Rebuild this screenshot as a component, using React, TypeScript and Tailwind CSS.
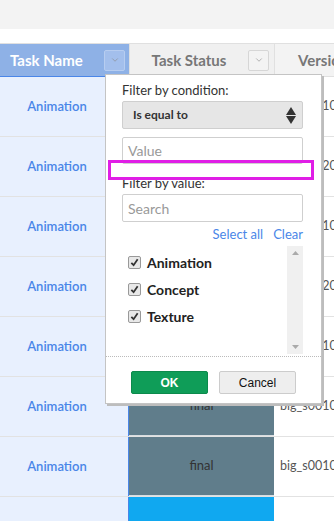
import { ChevronDown } from "lucide-react";

const rows = [
  { status: "bg-[#607d8b]", label: "final", ver: "big_s0010_comp" },
  { status: "bg-[#607d8b]", label: "final", ver: "big_s0020_comp" },
  { status: "bg-[#607d8b]", label: "final", ver: "big_s0010_comp" },
  { status: "bg-[#607d8b]", label: "final", ver: "big_s0020_comp" },
  { status: "bg-[#607d8b]", label: "final", ver: "big_s0010_comp" },
  { status: "bg-[#607d8b]", label: "final", ver: "big_s0010_comp" },
  { status: "bg-[#607d8b]", label: "final", ver: "big_s0010_comp" },
  { status: "bg-[#10a8f0]", label: "", ver: "" },
];

const HeaderButton = ({ dark }: { dark?: boolean }) => (
  <div
    className={`w-[21px] h-[21px] flex items-center justify-center border rounded-[2px] ${
      dark ? "bg-[#a3bfec] border-[#b7cdf0]" : "bg-[#f3f3f3] border-[#d6d6d6]"
    }`}
  >
    <ChevronDown size={10} strokeWidth={1.5} className="text-[#888]" />
  </div>
);

const Check = () => (
  <div className="w-[13px] h-[13px] rounded-[2px] border border-[#999] bg-[#e8e8e8] flex items-center justify-center">
    <svg width="9" height="9" viewBox="0 0 10 10">
      <path d="M1.5 5.5 L4 8 L8.5 1.5" fill="none" stroke="#333" strokeWidth="2" />
    </svg>
  </div>
);

const FilterPopup = () => (
  <div className="absolute left-[105px] top-[74px] w-[217px] bg-white border border-[#c4c4c4] shadow-[2px_2px_0_#bdbdbd] font-['Lato',sans-serif]">
    <div className="pl-4 pr-[18px] pt-[6px]">
      <div className="text-[13px] text-[#333] leading-[18px]">Filter by condition:</div>
      <div className="mt-[2px] h-[28px] bg-[#e6e6e6] border border-[#cfcfcf] rounded-[2px] flex items-center justify-between pl-[10px] pr-[6px]">
        <span className="text-[12px] font-bold text-[#333]">Is equal to</span>
        <svg width="10" height="17" viewBox="0 0 10 17">
          <path d="M5 0 L10 8 L0 8 Z M0 9 L10 9 L5 17 Z" fill="#333" />
        </svg>
      </div>
      <div className="mt-[8px] h-[27px] border border-[#cfcfcf] rounded-[2px] flex items-center pl-[5px] text-[14px] text-[#999]">
        Value
      </div>
      <div className="mt-[10px] text-[13px] text-[#333] leading-[18px]">Filter by value:</div>
      <div className="mt-[2px] h-[28px] border border-[#cfcfcf] rounded-[2px] flex items-center pl-[5px] text-[14px] text-[#999]">
        Search
      </div>
      <div className="mt-[3px] flex justify-end gap-[10px] text-[13px] text-[#4a86e8] leading-[18px]">
        <span>Select all</span>
        <span>Clear</span>
      </div>
      <div className="mt-[3px] h-[108px] flex">
        <div className="flex-1 flex flex-col gap-[10px] pl-[6px] pt-[8px]">
          {["Animation", "Concept", "Texture"].map((t) => (
            <div key={t} className="flex items-center gap-[6px] h-[17px]">
              <Check />
              <span className="text-[14px] font-bold text-[#222]">{t}</span>
            </div>
          ))}
        </div>
        <div className="w-[16px] bg-[#f0f0f0] flex flex-col items-center justify-between py-[5px]">
          <svg width="7" height="4" viewBox="0 0 7 4">
            <path d="M0 4 L3.5 0 L7 4 Z" fill="#aaa" />
          </svg>
          <svg width="7" height="4" viewBox="0 0 7 4">
            <path d="M0 0 L7 0 L3.5 4 Z" fill="#aaa" />
          </svg>
        </div>
      </div>
    </div>
    <div className="mt-[2px] border-t border-dotted border-[#bbb]" />
    <div className="flex justify-center gap-[11px] pt-[14px] pb-[9px]">
      <div className="w-[77px] h-[23px] bg-[#0f9d58] border border-[#0c8a4c] rounded-[2px] flex items-center justify-center text-white text-[12px] font-bold font-['Liberation_Sans',sans-serif]">
        OK
      </div>
      <div className="w-[77px] h-[23px] bg-[#eeeeee] border border-[#cccccc] rounded-[2px] flex items-center justify-center text-[#111] text-[12px] font-['Liberation_Sans',sans-serif]">
        Cancel
      </div>
    </div>
    <div className="absolute left-[2px] top-[85px] w-[206px] h-[20px] border-[3px] border-[#e01ee6]" />
  </div>
);

export default function App() {
  return (
    <div className="relative w-[334px] h-[521px] overflow-hidden bg-white font-['Lato',sans-serif]">
      <div className="h-[29px] bg-[#f3f3f3]" />
      <div className="h-[14px] bg-white" />
      <div className="grid grid-cols-[129px_145px_1fr] h-[34px] border-t border-[#e0e0e0]">
        <div className="bg-[#8eb1e6] border-b border-[#4a86e8] flex items-center pl-[10px] pr-[4px]">
          <span className="flex-1 text-[15px] font-bold text-white">Task Name</span>
          <HeaderButton dark />
        </div>
        <div className="bg-[#f0f0f0] border-l border-[#e0e0e0] border-b border-b-[#e0e0e0] flex items-center pr-[5px]">
          <span className="flex-1 text-center text-[15px] font-bold text-[#777]">Task Status</span>
          <HeaderButton />
        </div>
        <div className="bg-[#f3f3f3] border-l border-[#e0e0e0] border-b border-b-[#e0e0e0] flex items-center pl-[23px] overflow-hidden whitespace-nowrap">
          <span className="text-[15px] font-bold text-[#777]">Version</span>
        </div>
      </div>
      {rows.map((r, i) => (
        <div key={i} className="grid grid-cols-[129px_145px_1fr] h-[60px] border-b border-[#e2e2e2]">
          <div className="bg-[#e8f0fe] border-r border-[#4a86e8] flex items-center justify-center pr-[14px] text-[13px] font-semibold text-[#4a86e8]">
            {i < 7 ? "Animation" : ""}
          </div>
          <div className={`${r.status} border-b border-[#d8dde0] flex items-center justify-center text-[13px] text-[#333]`}>
            {r.label}
          </div>
          <div className="flex items-center pl-[6px] text-[12.5px] text-[#555] overflow-hidden whitespace-nowrap">
            {r.ver}
          </div>
        </div>
      ))}
      <FilterPopup />
    </div>
  );
}
